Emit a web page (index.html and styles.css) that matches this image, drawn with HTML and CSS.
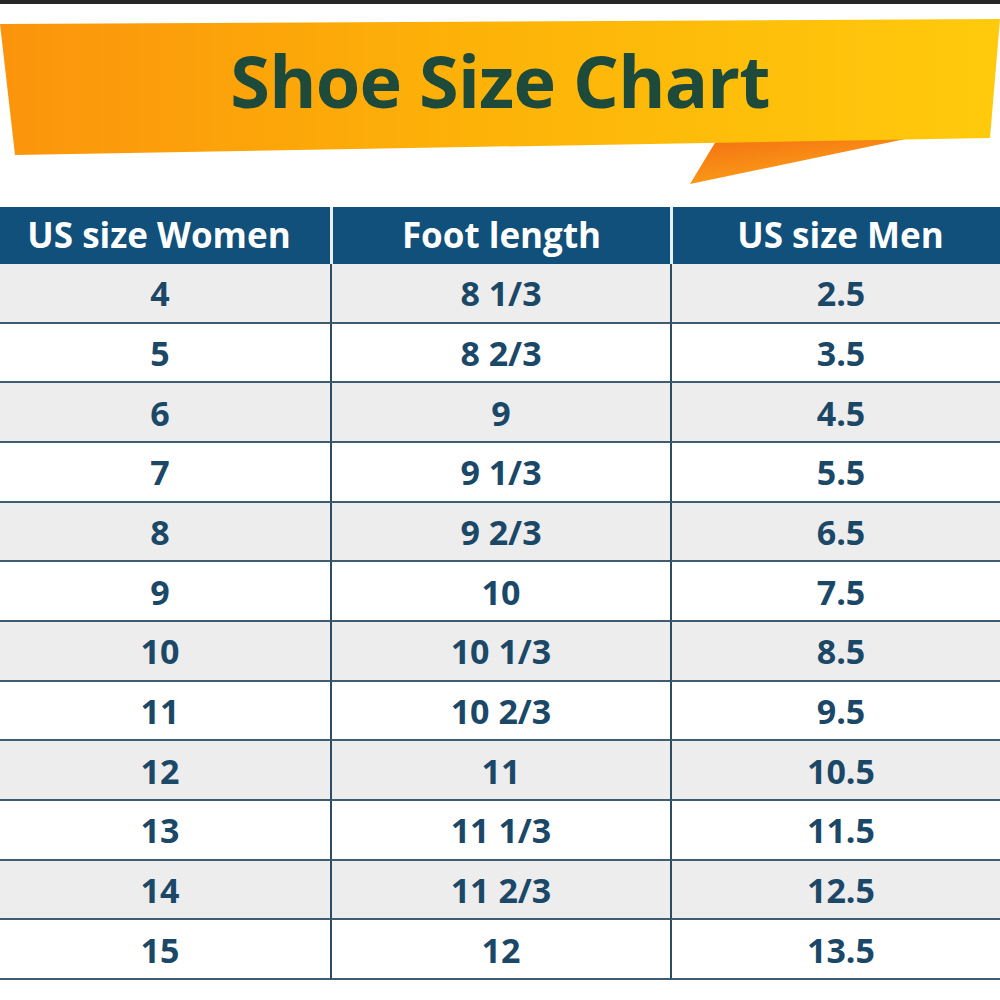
FILE: index.html
```html
<!DOCTYPE html>
<html>
<head>
<meta charset="utf-8">
<link rel="stylesheet" href="styles.css">
</head>
<body>
<div class="topbar"></div>
<header class="banner">
  <svg class="ribbon" viewBox="0 0 1000 203" preserveAspectRatio="none" aria-hidden="true">
    <defs>
      <linearGradient id="main" x1="0" y1="0" x2="1" y2="0">
        <stop offset="0" stop-color="#fb940c"/>
        <stop offset="0.45" stop-color="#fdb108"/>
        <stop offset="1" stop-color="#ffca0c"/>
      </linearGradient>
      <linearGradient id="fold" x1="0" y1="0" x2="0.6" y2="1">
        <stop offset="0" stop-color="#f46e10"/>
        <stop offset="1" stop-color="#fca51a"/>
      </linearGradient>
    </defs>
    <polygon points="716,137 915,133 690,180" fill="url(#fold)"/>
    <polygon points="0,20 1000,15 990,134 15,151" fill="url(#main)"/>
  </svg>
  <h1 class="title">Shoe Size Chart</h1>
</header>
<section class="chart">
  <div class="head">US size Women</div>
  <div class="head">Foot length</div>
  <div class="head">US size Men</div>

  <div class="cell alt">4</div><div class="cell alt">8 1/3</div><div class="cell alt">2.5</div>
  <div class="cell">5</div><div class="cell">8 2/3</div><div class="cell">3.5</div>
  <div class="cell alt">6</div><div class="cell alt">9</div><div class="cell alt">4.5</div>
  <div class="cell">7</div><div class="cell">9 1/3</div><div class="cell">5.5</div>
  <div class="cell alt">8</div><div class="cell alt">9 2/3</div><div class="cell alt">6.5</div>
  <div class="cell">9</div><div class="cell">10</div><div class="cell">7.5</div>
  <div class="cell alt">10</div><div class="cell alt">10 1/3</div><div class="cell alt">8.5</div>
  <div class="cell">11</div><div class="cell">10 2/3</div><div class="cell">9.5</div>
  <div class="cell alt">12</div><div class="cell alt">11</div><div class="cell alt">10.5</div>
  <div class="cell">13</div><div class="cell">11 1/3</div><div class="cell">11.5</div>
  <div class="cell alt">14</div><div class="cell alt">11 2/3</div><div class="cell alt">12.5</div>
  <div class="cell">15</div><div class="cell">12</div><div class="cell">13.5</div>
</section>
</body>
</html>
```
FILE: styles.css
```css
html, body {
  margin: 0;
  padding: 0;
  background: #ffffff;
}
body {
  font-family: "Open Sans", "Liberation Sans", sans-serif;
  width: 1000px;
  height: 1000px;
  overflow: hidden;
}
.topbar {
  height: 4px;
  background: #262626;
}
.banner {
  position: relative;
  height: 203px;
  display: flex;
  justify-content: center;
}
.ribbon {
  position: absolute;
  left: 0;
  top: 0;
  width: 1000px;
  height: 203px;
}
.title {
  position: relative;
  margin: 26px 0 0 0;
  font-size: 72px;
  font-weight: 700;
  line-height: 100px;
  color: #1e4a3c;
  letter-spacing: -0.8px;
}
.chart {
  display: grid;
  grid-template-columns: 330px 340px 330px;
  grid-template-rows: 57px repeat(12, 59.67px);
}
.head {
  background: #11507a;
  color: #ffffff;
  font-weight: 700;
  font-size: 35px;
  display: flex;
  align-items: center;
  justify-content: center;
  border-left: 3px solid #e8f0f6;
  padding-bottom: 2px;
}
.head:first-child {
  border-left: none;
  padding-right: 12px;
}
.head:nth-child(3) {
  padding-left: 8px;
}
.cell {
  display: flex;
  align-items: center;
  justify-content: center;
  font-weight: 700;
  font-size: 34px;
  color: #1c4868;
  background: #ffffff;
  border-bottom: 2px solid #3f5c70;
  border-left: 2px solid #2c4d66;
  box-sizing: border-box;
  padding-top: 1px;
}
.cell:nth-child(3n+1) {
  border-left: none;
  padding-right: 10px;
}
.cell:nth-child(3n) {
  padding-left: 10px;
}
.cell.alt {
  background: #ededed;
}
```
